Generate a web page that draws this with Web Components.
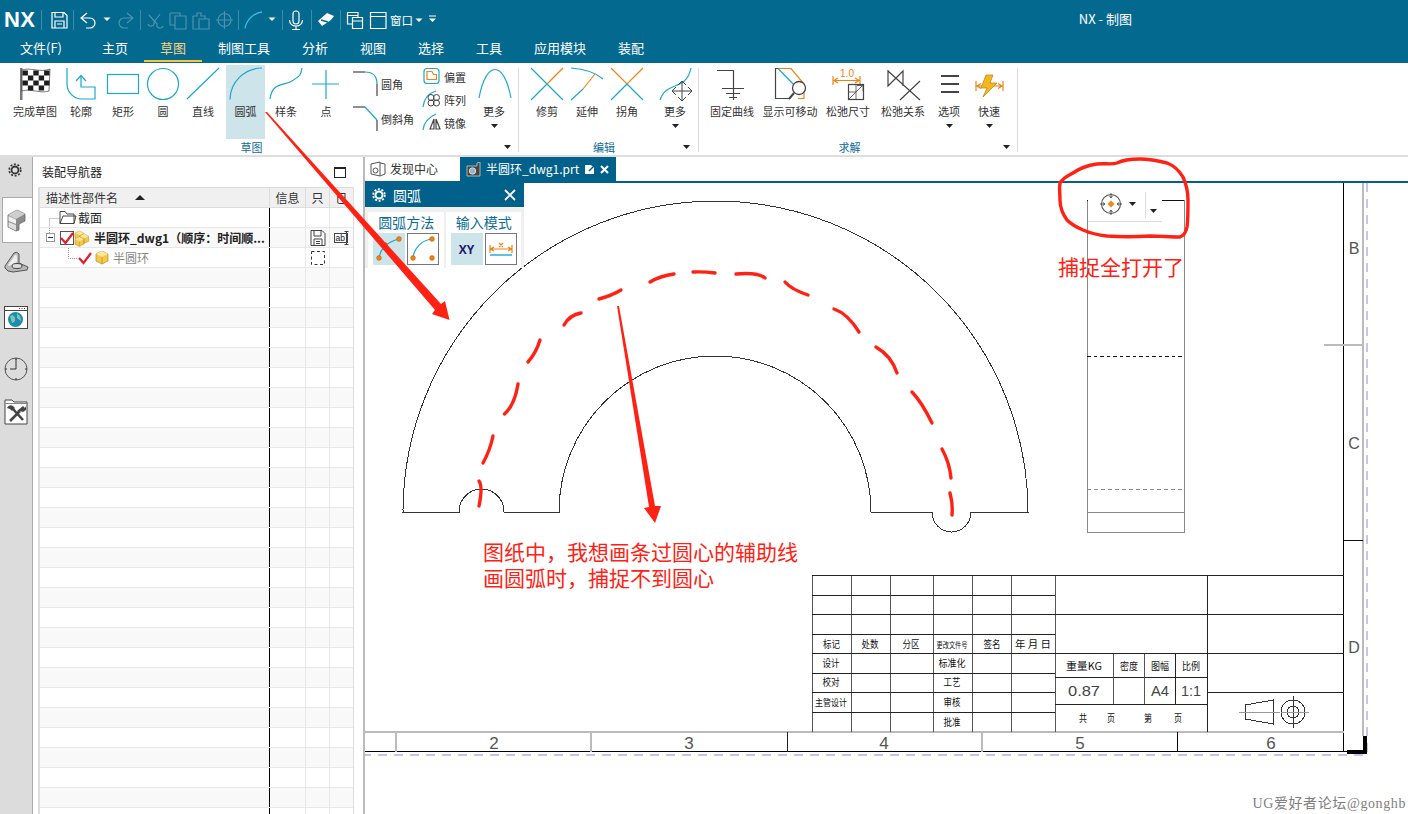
<!doctype html>
<html lang="zh">
<head>
<meta charset="utf-8">
<title>NX - 制图</title>
<style>
  html,body{ margin:0; height:100%; overflow:hidden; background:#fff; }
</style>
</head>
<body>
<nx-app></nx-app>
<script>
const TEAL='#1aa8cc', ORG='#ef8210', DARK='#444', BAR='#04698f', DEEP='#02618a';

function ln(d,c=DARK,w=1.2,extra=''){ return `<path d="${d}" fill="none" stroke="${c}" stroke-width="${w}" ${extra}/>`; }
function dot(x,y,r=2.4){ return `<circle cx="${x}" cy="${y}" r="${r}" fill="${ORG}" stroke="#b75f00" stroke-width=".5"/>`; }

// icons are written in page coordinates, each tool cuts its own viewBox out of them
let flag=`<path d="M20 68h2.5v32H20z" fill="#777"/><path d="M22 70c9-3 18 3 28-1l-1 22c-9 3-18-3-27 0z" fill="#fff" stroke="#222" stroke-width=".6"/>`;
[[0,0],[2,0],[4,0],[1,1],[3,1],[0,2],[2,2],[4,2],[1,3],[3,3]].forEach(([c,r])=>{
  flag+=`<rect x="${22.5+c*5.4}" y="${70.5+r*5}" width="5.4" height="5" fill="#1d1d1d"/>`;
});
const ICONS={
  flag,
  outline: ln('M67 68V84A15 15 0 0 0 82 99H95V87H81V76',TEAL)+ln('M76 81L81 75.5L86 81',TEAL),
  rect: `<rect x="107.5" y="74.5" width="31" height="19" fill="none" stroke="${TEAL}" stroke-width="1.2"/>`,
  circle: `<circle cx="163" cy="84" r="15.5" fill="none" stroke="${TEAL}" stroke-width="1.2"/>`,
  line: ln('M187 99L219 68',TEAL),
  arc: ln('M230 99.5A32 32 0 0 1 262 68',TEAL),
  spline: ln('M270 99C272 82 284 86 292 81S301 75 302 68',TEAL),
  point: ln('M312 84H339M326 70V99',TEAL),
  fillet: ln('M353 72H365',DARK)+ln('M365 72Q377 72 377 84',TEAL)+ln('M377 84V96',DARK),
  chamfer: ln('M353 107H365',DARK)+ln('M365 107L377 120',TEAL)+ln('M377 120V131',DARK),
  offset: `<rect x="424" y="68.5" width="15" height="15" rx="3" fill="none" stroke="${TEAL}" stroke-width="1.2"/><path d="M427 71.5h5l1.5 3h3v5h-9.5z" fill="#fff" stroke="${ORG}" stroke-width="1.2"/>`,
  pattern: ln('M423 107C424 98 429 93 436 91',TEAL)+`<g fill="none" stroke="${DARK}"><circle cx="431" cy="97.5" r="3"/><circle cx="436.5" cy="97.5" r="3"/><circle cx="431" cy="103" r="3"/><circle cx="436.5" cy="103" r="3"/></g>`,
  mirror: ln('M423 130C424 122 429 117 436 114',TEAL)+ln('M430 129L434 119V129ZM436 119V129H440Z',DARK),
  more: ln('M479 98C486 60 504 60 511 98',TEAL),
  trim: ln('M531 68L563 100M547 84L531 100',TEAL)+ln('M563 68L547 84',ORG),
  extend: ln('M571 68C585 69 596 73 603 79',TEAL)+ln('M571 100L583 89',TEAL)+ln('M583 89L595 74',ORG),
  corner: ln('M611 68L627 84L643 68',ORG)+ln('M627 84L611 100M627 84L643 100',TEAL),
  more2: ln('M660 100C667 80 686 92 691 68',TEAL)+ln('M672 91H692M682 81V101M678 85L682 81L686 85M678 97L682 101L686 97M676 87L672 91L676 95M688 87L692 91L688 95',DARK,1),
  fix: ln('M717 70.5H733.5V100M722 88.5H744M726 93.5H740M729 97.5H737',DARK),
  movable: ln('M789 98.5H775.5V68.5H779',DARK)+ln('M779 68.5H791L804 84V98.5H798',ORG)+ln('M778 68.5L796 87',TEAL)+`<circle cx="799" cy="88" r="6.5" fill="#fff" stroke="${DARK}" stroke-width="1.3"/>`+ln('M794 93L789 99',DARK,2),
  relaxdim: ln('M833 76V85M860 76V85M834 80.5H859M838 78L834 80.5L838 83M855 78L859 80.5L855 83',ORG)+`<text x="847" y="77" font-size="10" text-anchor="middle" fill="${ORG}" font-family="Liberation Sans">1.0</text>`+`<rect x="848.5" y="84.5" width="15" height="15" fill="#fff" stroke="${DARK}" stroke-width="1.2"/>`+ln('M849 99L863 85M857 85.5H863V91M856 85V99M849 92H856',DARK,.8),
  relaxrel: ln('M888 70V86L903 71V86M888 71L920 100M920 81L900 100',DARK),
  options: `<path d="M941 75h18v2h-18zM941 83h18v2h-18zM941 91h18v2h-18z" fill="${DARK}"/>`,
  quick: ln('M976 81V91M1003 81V91M977 86H1002M981 83.5L977 86L981 88.5M998 83.5L1002 86L998 88.5',ORG)+`<path d="M993 75H986L981 88H987L983 97L997 83H990Z" fill="#f4b81e" stroke="#b27f08" stroke-width=".7"/>`,
};

function caret(w=7){ return `<svg width="${w}" height="4" viewBox="0 0 7 4" style="display:block"><path d="M0 0H7L3.5 4Z" fill="currentColor"/></svg>`; }

customElements.define('nx-titlebar', class extends HTMLElement{
  constructor(){ super(); this.attachShadow({mode:'open'}); }
  connectedCallback(){
    const W='#fff', F='#4d93ae';
    const seps=[41.5,73.5,140.5,238.5,282.5,311.5,340.5].map(x=>`<path d="M${x} 10V30" stroke="#3f8aa9"/>`).join('');
    const tri=(x,y)=>`<path d="M${x-3.5} ${y-1.5}H${x+3.5}L${x} ${y+2}Z" fill="#fff"/>`;
    this.shadowRoot.innerHTML=`
    <style>
      :host{ display:flex; align-items:center; height:38px; background:${BAR}; color:#fff; padding-top:2px; box-sizing:border-box; }
      .logo{ font:bold 22px/24px "Liberation Sans",sans-serif; width:40px; padding-left:4px; box-sizing:border-box; letter-spacing:.3px; }
      svg{ display:block; flex:none; }
      .win{ font-size:11.5px; line-height:16px; margin-left:2px; width:22px; white-space:nowrap; }
      .title{ margin-left:auto; margin-right:276px; font-size:13px; line-height:16px; margin-top:-2px; white-space:nowrap; }
    </style>
    <span class="logo">NX</span>
    <svg width="348" height="24" viewBox="40 8 348 24">
      ${seps}
      ${ln('M52 12.5H64L67 15.5V28H52ZM55 12.5V17H63V12.5M55 28V21H64V28M57 24H62',W,1.2)}
      ${ln('M87 13L81 18L87 23M81 18H90A5 5 0 0 1 90 28H86',W,1.2)}${tri(107,19)}
      ${ln('M127 13L133 18L127 23M133 18H124A5 5 0 0 0 124 28H128',F,1.2)}
      ${ln('M148 24A3 3 0 1 0 154 22L160 14M163 26A3 3 0 1 1 157 24L149 15',F,1.2)}
      ${ln('M170 13H180V16M175 16H186V29H175ZM175 25H170V13',F,1.2)}
      ${ln('M193 16H197V13H201V16H205V19M199 19H209V29H199ZM199 29H193V16',F,1.2)}
      ${ln('M218 20A6.5 6.5 0 1 1 231 20A6.5 6.5 0 1 1 218 20M224.5 11V29M216 20H233',F,1.2)}
      ${ln('M245 28.5A20 20 0 0 1 262 12','#35bde6',1.3)}${tri(272,19)}
      ${ln('M293 14A3 3 0 0 1 299 14V21A3 3 0 0 1 293 21ZM289.5 20C289.5 28 302.5 28 302.5 20M296 26V29.5M292 29.5H300',W,1.2)}
      <path d="M318 21L327 13L334 16L331 20L322 26Z" fill="${W}"/><path d="M321 20L328 22" stroke="${BAR}" stroke-width="1.4"/>
      ${ln('M347.5 12.5H358V17M347.5 12.5V24H352M347.5 15.5H358M352.5 17.5H362.5V28.5H352.5ZM352.5 21H362.5',W,1.2)}
      ${ln('M370.5 12.5H386V28.5H370.5ZM370.5 16.5H386',W,1.2)}
    </svg>
    <span class="win">窗口</span>
    <svg width="30" height="24" viewBox="414 8 30 24" style="margin-left:2px">${tri(419,20)}<path d="M429 16H436" stroke="#fff"/>${tri(432.5,20)}</svg>
    <span class="title">NX - 制图</span>`;
  }
});

customElements.define('nx-menubar', class extends HTMLElement{
  constructor(){ super(); this.attachShadow({mode:'open'}); }
  connectedCallback(){
    const items=['主页','草图','制图工具','分析','视图','选择','工具','应用模块','装配'];
    this.shadowRoot.innerHTML=`
    <style>
      :host{ display:flex; height:25px; background:${BAR}; color:#fff; font-size:13px; line-height:20px; padding-left:20px; box-sizing:border-box; }
      span{ display:block; height:24px; padding:0 16px; box-sizing:border-box; white-space:nowrap; }
      .file{ padding:0 24px 0 0; }
      .on{ color:#fbd27d; border-bottom:2px solid #f5c543; }
    </style>
    <span class="file">文件(F)</span>
    ${items.map(t=>`<span class="${t=='草图'?'on':''}">${t}</span>`).join('')}`;
  }
});

customElements.define('nx-tool', class extends HTMLElement{
  constructor(){ super(); this.attachShadow({mode:'open'}); }
  connectedCallback(){
    const x=+this.getAttribute('x'), w=+this.getAttribute('w');
    this.shadowRoot.innerHTML=`
    <style>
      :host{ display:flex; flex-direction:column; align-items:center; flex:none; height:74px; width:${w}px; color:#333; }
      :host([active]){ background:#cce4ea; }
      svg{ display:block; flex:none; overflow:visible; }
      .t{ margin-top:2px; line-height:14px; white-space:nowrap; }
      .c{ margin-top:6px; color:#222; }
    </style>
    <svg width="${w}" height="37" viewBox="${x} 65 ${w} 37">${ICONS[this.getAttribute('icon')]}</svg>
    <div class="t"><slot></slot></div>
    ${this.hasAttribute('drop')?`<div class="c">${caret()}</div>`:''}`;
  }
});

customElements.define('nx-mini', class extends HTMLElement{
  constructor(){ super(); this.attachShadow({mode:'open'}); }
  connectedCallback(){
    const [x,y,w,h]=this.getAttribute('box').split(' ').map(Number);
    this.shadowRoot.innerHTML=`
    <style>
      :host{ display:flex; align-items:center; height:${h}px; color:#333; white-space:nowrap; }
      svg{ display:block; flex:none; }
    </style>
    <svg width="${w}" height="${h}" viewBox="${x} ${y} ${w} ${h}">${ICONS[this.getAttribute('icon')]}</svg><slot></slot>`;
  }
});

customElements.define('nx-group', class extends HTMLElement{
  constructor(){ super(); this.attachShadow({mode:'open'}); }
  connectedCallback(){
    this.shadowRoot.innerHTML=`
    <style>
      :host{ display:flex; flex-direction:column; flex:none; box-sizing:border-box; position:relative; }
      :host::after{ content:""; position:absolute; right:0; top:3px; bottom:3px; width:1px; background:#d9d9d9; }
      .tools{ display:flex; height:74px; }
      .foot{ display:flex; height:16px; align-items:center; color:#222; }
      .name{ flex:1; text-align:center; color:#0b6c96; line-height:16px; }
      .c{ width:var(--tail); padding-left:var(--ml); box-sizing:border-box; }
    </style>
    <div class="tools"><slot></slot></div>
    <div class="foot"><div class="name">${this.getAttribute('name')}</div><div class="c">${caret()}</div></div>`;
  }
});

customElements.define('nx-ribbon', class extends HTMLElement{
  constructor(){ super(); this.attachShadow({mode:'open'}); }
  connectedCallback(){
    const tools=(x,list)=>list.map(([w,icon,label,opt])=>{
      const s=`<nx-tool x="${x}" w="${w}" icon="${icon}" ${opt||''}>${label}</nx-tool>`;
      x+=w; return s;
    }).join('');
    this.shadowRoot.innerHTML=`
    <style>
      :host{ display:flex; height:94px; box-sizing:border-box; padding:2px 0 0 8px; background:#fff; border-bottom:2px solid #ddd; font-size:11px; }
      .stack{ display:flex; flex-direction:column; flex:none; }
      .fil{ width:75px; padding-top:4px; gap:5px; box-sizing:border-box; }
      .tri{ width:50px; }
    </style>
    <nx-group name="草图" style="width:511px;--tail:24px;--ml:9px">
      ${tools(8,[[54,'flag','完成草图'],[38,'outline','轮廓'],[46,'rect','矩形'],[34,'circle','圆'],[46,'line','直线'],[39,'arc','圆弧','active'],[42,'spline','样条'],[38,'point','点']])}
      <div class="stack fil">
        <nx-mini box="345 69 36 30" icon="fillet">圆角</nx-mini>
        <nx-mini box="345 104 36 30" icon="chamfer">倒斜角</nx-mini>
      </div>
      <div class="stack tri">
        <nx-mini box="420 65 24 23" icon="offset">偏置</nx-mini>
        <nx-mini box="420 88 24 23" icon="pattern">阵列</nx-mini>
        <nx-mini box="420 111 24 23" icon="mirror">镜像</nx-mini>
      </div>
      ${tools(470,[[48,'more','更多','drop']])}
    </nx-group>
    <nx-group name="编辑" style="width:180px;padding-left:8px;--tail:18px;--ml:2px">
      ${tools(527,[[40,'trim','修剪'],[40,'extend','延伸'],[40,'corner','拐角']])}
      <span style="width:4px"></span>
      ${tools(651,[[48,'more2','更多','drop']])}
    </nx-group>
    <nx-group name="求解" style="width:319px;--tail:18px;--ml:3px">
      ${tools(699,[[66,'fix','固定曲线'],[50,'movable','显示可移动'],[66,'relaxdim','松弛尺寸'],[44,'relaxrel','松弛关系'],[48,'options','选项','drop'],[32,'quick','快速','drop']])}
    </nx-group>`;
  }
});

customElements.define('nx-sidebar', class extends HTMLElement{
  constructor(){ super(); this.attachShadow({mode:'open'}); }
  connectedCallback(){
    this.shadowRoot.innerHTML=`
    <style>
      :host{ display:block; width:33px; background:#dcdcdc; border-right:1px solid #aaa; box-sizing:border-box; flex:none; }
      div{ display:flex; align-items:center; justify-content:center; box-sizing:border-box; }
      svg{ display:block; }
      .on{ background:#fff; width:30px; margin-left:2px; border:1px solid #aaa; border-right:0; }
    </style>
    <div style="height:40px;padding:0 3px 14px 0">
      <svg width="14" height="14" viewBox="0 0 14 14"><circle cx="7" cy="7" r="3.5" fill="none" stroke="#333" stroke-width="1.8"/><circle cx="7" cy="7" r="5.8" fill="none" stroke="#333" stroke-width="1.6" stroke-dasharray="2 1.64"/></svg>
    </div>
    <div class="on" style="height:46px;padding-right:2px">
      <svg width="19" height="23" viewBox="0 0 19 23"><path d="M1 6L10 1L18 5L18 12L12 15V21L9 22L1 18Z" fill="#8c8c8c" stroke="#666" stroke-width=".8"/><path d="M1 6L10 1L18 5L9 10Z" fill="#cfcfcf"/><path d="M1.5 7L9 10.5V15L1.5 12Z" fill="#f0f0f0"/><path d="M1.5 13L9 16V21.5L1.5 18Z" fill="#dedede"/></svg>
    </div>
    <div style="height:38px">
      <svg width="25" height="22" viewBox="0 0 25 22"><path d="M1 15L10 2Q13 0 15 3V12L24 16L23 19L9 21Q3 21 1 17Z" fill="#b8b8b8" stroke="#555"/><path d="M4 14L11 4Q13 3 13 6V11L5 15Z" fill="#eee"/><ellipse cx="13" cy="15" rx="5" ry="2.5" fill="#ddd" stroke="#444"/></svg>
    </div>
    <div style="height:13px"></div>
    <div style="height:46px">
      <svg width="24" height="23" viewBox="0 0 24 23"><rect x=".5" y=".5" width="23" height="22" fill="#fff" stroke="#444"/><path d="M1 4.5H23" stroke="#444"/><path d="M15 2.5H22" stroke="#444" stroke-dasharray="1 1.5"/><circle cx="11.5" cy="13.5" r="7.5" fill="#1b8db0"/><path d="M6 10Q10 8 11 12T8 17ZM13 7Q17 10 17 15L13 12Z" fill="#7fc4b0"/></svg>
    </div>
    <div style="height:3px"></div>
    <div style="height:52px">
      <svg width="24" height="24" viewBox="0 0 24 24"><circle cx="12" cy="12" r="11" fill="none" stroke="#555"/><path d="M12 1V3M12 21V23M1 12H3M21 12H23M12 2V12H6" fill="none" stroke="#333"/></svg>
    </div>
    <div style="height:34px">
      <svg width="24" height="26" viewBox="0 0 24 26"><path d="M1 4V1H8L10 3H23V25H1Z" fill="#fff" stroke="#444"/><path d="M1 4.5H23" stroke="#888"/><path d="M6 22L16 12M9 10L19 21" stroke="#444" stroke-width="2.6"/><path d="M3 9A4 4 0 0 1 9 7L11 9L8 12L6 10ZM13 12L19 7L21 9L22 7V11L19 13L16 12L15 14Z" fill="#444"/></svg>
    </div>`;
  }
});

customElements.define('nx-tree-row', class extends HTMLElement{
  constructor(){ super(); this.attachShadow({mode:'open'}); }
  connectedCallback(){
    const odd=this.hasAttribute('odd');
    this.shadowRoot.innerHTML=`
    <style>
      :host{ display:grid; grid-template-columns:230px 36px 24px 23px; height:20px; box-sizing:border-box; background:${odd?'#f9f9f9':'#fff'}; border-bottom:1px solid #e8e8e8; font-size:12px; line-height:19px; color:#222; }
      .c{ box-sizing:border-box; border-right:1px solid #e8e8e8; display:flex; align-items:center; justify-content:center; overflow:visible; min-width:0; }
      .n{ border-right-color:#000; justify-content:flex-start; white-space:nowrap; }
      ::slotted(svg){ display:block; flex:none; }
    </style>
    <div class="c n"><slot></slot></div>
    <div class="c"></div>
    <div class="c"><slot name="a"></slot></div>
    <div class="c" style="border-right:0"><slot name="b"></slot></div>`;
  }
});

customElements.define('nx-navigator', class extends HTMLElement{
  constructor(){ super(); this.attachShadow({mode:'open'}); }
  connectedCallback(){
    const check=(c='#e0202a')=>`<path d="M0 6L4.5 11L12 1" fill="none" stroke="${c}" stroke-width="2.2"/>`;
    const gold=(x,y,s=1)=>`<g transform="translate(${x} ${y}) scale(${s})"><path d="M0 3L6 0L12 3V10L6 13L0 10Z" fill="#f5c84a" stroke="#b9861a" stroke-width=".7"/><path d="M0 3L6 6L12 3L6 0Z" fill="#fde69a"/><path d="M6 6V13" stroke="#b9861a" stroke-width=".6"/></g>`;
    let rows='';
    for(let i=3;i<32;i++) rows+=`<nx-tree-row ${i%2?'odd':''}></nx-tree-row>`;
    this.shadowRoot.innerHTML=`
    <style>
      :host{ display:flex; flex-direction:column; width:330px; flex:none; background:#fff; overflow:hidden; font-size:12px; color:#222; }
      .head{ display:flex; align-items:center; justify-content:space-between; height:30px; flex:none; padding:0 17px 0 9px; box-sizing:border-box; line-height:16px; }
      .max{ width:12px; height:11px; border:1px solid #222; border-top-width:2px; box-sizing:border-box; }
      .table{ margin-left:5px; width:316px; flex:1; min-height:0; border:solid #ddd; border-width:0 1px 0 2px; box-sizing:border-box; overflow:hidden; }
      .cols{ display:grid; grid-template-columns:230px 36px 24px 23px; height:21px; background:#f0f0f0; border-bottom:1px solid #ddd; border-top:1px solid #ddd; box-sizing:border-box; font-size:12px; line-height:19px; color:#333; }
      .cols div{ border-right:1px solid #ddd; text-align:center; white-space:nowrap; overflow:hidden; }
      .cols .f{ text-align:left; padding-left:6px; display:flex; align-items:center; gap:17px; }
      .cols svg{ display:block; }
      .txt{ white-space:nowrap; }
    </style>
    <div class="head"><span>装配导航器</span><span class="max"></span></div>
    <div class="table">
      <div class="cols">
        <div class="f">描述性部件名<svg width="10" height="5"><path d="M0 5H10L5 0Z" fill="#222"/></svg></div>
        <div>信息</div><div>只</div><div style="border-right:0">已</div>
      </div>
      <nx-tree-row>
        <svg width="38" height="19" viewBox="0 0 38 19"><path d="M9.5 10.5H19M9.5 10.5V19" fill="none" stroke="#999" stroke-dasharray="1 1"/><path d="M20 3.5H25L27 6H34V15.5H20ZM20 15.5L23 8H36L34 15.5" fill="none" stroke="#444"/></svg>
        <span class="txt">截面</span>
      </nx-tree-row>
      <nx-tree-row odd>
        <svg width="50" height="19" viewBox="0 0 50 19"><path d="M9.5 0V5" stroke="#999" stroke-dasharray="1 1"/><rect x="6.5" y="5.5" width="8" height="8" fill="#fff" stroke="#999"/><path d="M8 9.5H13" stroke="#333"/><rect x="20.5" y="3.5" width="13" height="13" fill="#fff" stroke="#555"/><g transform="translate(21 4)">${check()}</g>${gold(35,3,.72)}${gold(40,6,.72)}${gold(35,9,.72)}</svg>
        <b class="txt" style="margin-left:4px">半圆环_dwg1（顺序：时间顺...</b>
        <svg slot="a" width="16" height="16" viewBox="0 0 16 16"><path d="M1 .5H12L15 3.5V15.5H1ZM4 .5V6H11V.5M4 15.5V9H12V15.5M6 11.5H10M6 13.5H10" fill="none" stroke="#444"/></svg>
        <svg slot="b" width="16" height="14" viewBox="0 0 16 14"><rect x=".5" y="2.5" width="13" height="9" fill="none" stroke="#444"/><text x="1.5" y="10" font-size="8.5" font-family="Liberation Sans" fill="#222">ab</text><path d="M12.5 0V14M10.5 .5H14.5M10.5 13.5H14.5" stroke="#444"/></svg>
      </nx-tree-row>
      <nx-tree-row>
        <svg width="70" height="19" viewBox="0 0 70 19"><path d="M28.5 0V10.5H38" fill="none" stroke="#999" stroke-dasharray="1 1"/><g transform="translate(39 4)">${check('#e31c2c')}</g>${gold(56,3)}</svg>
        <span class="txt" style="margin-left:3px;color:#888">半圆环</span>
        <svg slot="a" width="14" height="14" viewBox="0 0 14 14"><rect x=".5" y=".5" width="13" height="13" fill="none" stroke="#333" stroke-dasharray="3 2.5"/></svg>
      </nx-tree-row>
      ${rows}
    </div>`;
  }
});

customElements.define('nx-tabs', class extends HTMLElement{
  constructor(){ super(); this.attachShadow({mode:'open'}); }
  connectedCallback(){
    this.shadowRoot.innerHTML=`
    <style>
      :host{ display:flex; height:26px; flex:none; box-sizing:border-box; border-bottom:2px solid ${DEEP}; font-size:12px; line-height:24px; background:#fff; }
      .t{ display:flex; align-items:center; height:24px; white-space:nowrap; }
      .a{ width:95px; padding-left:5px; box-sizing:border-box; gap:4px; color:#333; }
      .b{ width:156px; background:${DEEP}; color:#fff; padding-left:6px; box-sizing:border-box; gap:5px; }
      svg{ display:block; flex:none; }
    </style>
    <div class="t a">
      <svg width="16" height="16" viewBox="0 0 16 16"><path d="M1 3L10 1V15L1 13ZM10 2L15 3V13L10 15" fill="none" stroke="#555"/><circle cx="5.5" cy="9.5" r="2.5" fill="none" stroke="#555"/></svg>
      发现中心
    </div>
    <div class="t b">
      <svg width="15" height="15" viewBox="0 0 15 15"><path d="M1 4H11V1L14 0V14H1Z" fill="#444" stroke="#ccc" stroke-width=".8"/><circle cx="6.5" cy="9" r="3.2" fill="#8fb7c6" stroke="#ddd"/></svg>
      半圆环_dwg1.prt
      <svg width="11" height="11" viewBox="0 0 11 11"><path d="M1 1H7L10 4V10H1Z" fill="#fff"/><path d="M5 7L9 3" stroke="${DEEP}" stroke-width="1.5"/></svg>
      <svg width="9" height="9" viewBox="0 0 9 9"><path d="M1 1L8 8M8 1L1 8" stroke="#fff" stroke-width="2"/></svg>
    </div>`;
  }
});

customElements.define('nx-arc-dialog', class extends HTMLElement{
  constructor(){ super(); this.attachShadow({mode:'open'}); }
  connectedCallback(){
    this.shadowRoot.innerHTML=`
    <style>
      :host{ position:absolute; left:0; top:0; width:159px; background:#f0f0f0; display:block; }
      .h{ display:flex; align-items:center; height:24px; background:${DEEP}; color:#fff; padding:0 8px 0 7px; box-sizing:border-box; font-size:14px; gap:7px; line-height:20px; }
      .x{ margin-left:auto; }
      .b{ display:flex; gap:2px; padding:5px 3px 0; height:61px; box-sizing:border-box; }
      .g{ background:#fff; width:76px; height:56px; padding:0 4px 0 5px; box-sizing:border-box; }
      .l{ color:#0b6c96; font-size:14px; line-height:21px; text-align:center; white-space:nowrap; }
      .r{ display:flex; gap:2px; }
      .k{ width:32px; height:32px; box-sizing:border-box; border:1px solid #777; background:#fff; display:flex; align-items:center; justify-content:center; font:bold 12px "Open Sans","Liberation Sans",sans-serif; color:#1f1a6e; }
      .k.on{ background:#cce4ea; border-color:#cce4ea; }
      svg{ display:block; }
    </style>
    <div class="h">
      <svg width="14" height="14" viewBox="0 0 14 14"><circle cx="7" cy="7" r="3.5" fill="none" stroke="#fff" stroke-width="2"/><circle cx="7" cy="7" r="5.8" fill="none" stroke="#fff" stroke-width="1.8" stroke-dasharray="2 1.64"/></svg>
      <span>圆弧</span>
      <svg class="x" width="12" height="12" viewBox="0 0 12 12"><path d="M1 1L11 11M11 1L1 11" stroke="#fff" stroke-width="1.8"/></svg>
    </div>
    <div class="b">
      <div class="g">
        <div class="l">圆弧方法</div>
        <div class="r">
          <div class="k on"><svg width="30" height="30" viewBox="0 0 30 30">${ln('M5 24C6 16 12 8 25 5',TEAL)}${dot(5,24)}${dot(11,11)}${dot(25,5)}</svg></div>
          <div class="k"><svg width="30" height="30" viewBox="0 0 30 30">${ln('M5 24C6 14 14 6 24 5',TEAL)}${dot(5,24)}${dot(24,24)}${dot(24,5)}</svg></div>
        </div>
      </div>
      <div class="g">
        <div class="l">输入模式</div>
        <div class="r">
          <div class="k on">XY</div>
          <div class="k"><svg width="30" height="30" viewBox="0 0 30 30">${ln('M4 11V19M26 11V19M4.5 15H25.5M8 13L4.5 15L8 17M22 13L25.5 15L22 17M13 9L17 13M17 9L13 13',ORG)}${ln('M4 21H26',TEAL,1.4)}</svg></div>
        </div>
      </div>
    </div>`;
  }
});

customElements.define('nx-snap-bar', class extends HTMLElement{
  constructor(){ super(); this.attachShadow({mode:'open'}); }
  connectedCallback(){
    this.shadowRoot.innerHTML=`
    <style>
      :host{ position:absolute; left:723px; top:9px; width:74px; height:30px; display:flex; align-items:flex-start; background:#fff; border-bottom:1px solid #ddd; box-sizing:border-box; color:#222; }
      svg{ display:block; flex:none; }
      i{ width:1px; height:26px; background:#ddd; margin-left:9px; flex:none; }
    </style>
    <svg width="24" height="24" viewBox="0 0 24 24" style="margin:0 0 0 11px">
      <circle cx="12" cy="12" r="9.5" fill="none" stroke="#555" stroke-width="1.1"/>
      <path d="M12 1V6M12 18V23M1 12H6M18 12H23M10.3 3.7L12 6L13.7 3.7M10.3 20.3L12 18L13.7 20.3M3.7 10.3L6 12L3.7 13.7M20.3 10.3L18 12L20.3 13.7" fill="none" stroke="#555"/>
      <path d="M12 8.5L15.5 12L12 15.5L8.5 12Z" fill="#f08a12"/>
    </svg>
    <span style="margin:10px 0 0 6px">${caret()}</span>
    <i></i>
    <span style="margin:17px 0 0 4px">${caret()}</span>`;
  }
});

customElements.define('nx-drawing', class extends HTMLElement{
  constructor(){ super(); this.attachShadow({mode:'open'}); }
  connectedCallback(){
    const G='#555', H='#222';
    const seg=(x1,y1,x2,y2,c=G,w=1,e='')=>`<line x1="${x1}" y1="${y1}" x2="${x2}" y2="${y2}" stroke="${c}" stroke-width="${w}" ${e}/>`;
    const cols=[812.5,851.5,890.5,933.5,972.5,1011.5,1055.5];
    const rows=[575.5,595.5,614.5,634.5,653.5,673.5,692.5,712.5,732];
    let g='';
    cols.forEach(x=>g+=seg(x,575,x,732,G));
    rows.slice(0,8).forEach(y=>g+=seg(812,y,1055,y,H));
    g+=seg(1055,575.5,1344,575.5,H)+seg(1055,614.5,1344,614.5,H)+seg(1055,653.5,1344,653.5,H);
    g+=seg(1207.5,575,1207.5,732,H)+seg(1207,692.5,1344,692.5,H);
    g+=seg(1055,677.5,1207,677.5,H)+seg(1055,704.5,1207,704.5,H,1.2);
    g+=seg(1113.5,654,1113.5,704,G)+seg(1144.5,654,1144.5,704,G)+seg(1175.5,654,1175.5,704,H);
    const t=(x,y,s,w,size=12,c='#111')=>`<text x="${x}" y="${y}" font-size="${size}" fill="${c}" text-anchor="middle" textLength="${w}" lengthAdjust="spacingAndGlyphs">${s}</text>`;
    const labels=[[831.5,648,'标记',17,10],[870,648,'处数',17,10],[911,648,'分区',17,10],[952,648,'更改文件号',31,8],[992,648,'签名',17,10],
      [1033,648,'年 月 日',36,10],[831,667,'设计',17,10],[952,667,'标准化',27,10],[831,686,'校对',17,10],[952,686,'工艺',17,10],
      [831,706,'主管设计',32,9],[952,706,'审核',17,10],[952,726,'批准',17,10],[1084,670,'重量KG',36,10],[1129,670,'密度',18,10],[1160,670,'图幅',18,10],[1191,670,'比例',18,10],
      [1083,722,'共',8,10],[1111,722,'页',8,10],[1148,722,'第',8,10],[1178,722,'页',8,10]];
    const thin=[[1084,696,'0.87',32],[1160,696,'A4',18],[1191,696,'1:1',20]];
    const nums=[[494,2],[689,3],[884,4],[1080,5],[1271,6]];
    const side=[['B',248],['C',443],['D',647]];
    this.shadowRoot.innerHTML=`
    <style>
      :host{ display:block; position:relative; flex:1; min-height:0; background:#fff; overflow:hidden; }
      svg{ position:absolute; left:0; top:0; display:block; font-family:"Noto Sans CJK SC","Liberation Sans",sans-serif; }
      .thin{ font-family:"Liberation Sans",sans-serif; }
    </style>
    <svg width="1043" height="631" viewBox="365 183 1043 631">
      <g shape-rendering="crispEdges">
        <path d="M403 512A312.5 311 0 0 1 1028 512H971A19.5 20 0 0 1 932 512H871A156 156 0 0 0 559 512H504A22.5 23 0 0 0 459 512Z" fill="none" stroke="#333"/>
        ${seg(1087.5,200,1087.5,532.5,'#888')}${seg(1184.5,200,1184.5,532.5,'#888')}
        ${seg(1087,200.5,1184,200.5,'#111')}
        ${seg(1087,356.5,1184,356.5,'#111',1,'stroke-dasharray="3.5 3"')}
        ${seg(1087,489.5,1184,489.5,'#888',1,'stroke-dasharray="4 3"')}
        ${seg(1087,512.5,1184,512.5,'#888')}${seg(1087,532.5,1184,532.5,'#888')}
        ${seg(1343.5,183,1343.5,752,'#000')}
        ${seg(1363,183,1363,736,'#bbb',2)}
        <path d="M1367 183V755H365" fill="none" stroke="#c4c4f4" stroke-width="2" stroke-dasharray="9 7"/>
        ${seg(1324,345,1363,345,'#bbb',2)}
        ${seg(1344,540.5,1363,540.5,'#111')}
        ${seg(365,732,1344,732,'#bbb',2)}
        ${seg(365,751.5,1364,751.5,'#000')}
        ${seg(396,732,396,752,'#bbb',2)}${seg(591,732,591,752,'#bbb',2)}
        ${seg(787.5,732,787.5,752,'#222')}${seg(982,732,982,752,'#bbb',2)}${seg(1177.5,732,1177.5,752,'#000')}
        <path d="M1347 752H1364.5V736" fill="none" stroke="#000" stroke-width="4"/>
        ${g}
        <path d="M1245 705L1273.5 700V724L1245 719Z" fill="none" stroke="#333"/>
        ${seg(1239,712.5,1280,712.5,'#999')}
        <circle cx="1293" cy="712" r="12" fill="none" stroke="#333"/><circle cx="1293" cy="712" r="6" fill="none" stroke="#333"/>
        ${seg(1293.5,696,1293.5,728,'#333')}${seg(1281,712.5,1309,712.5,'#999')}
      </g>
      ${labels.map(l=>t(...l)).join('')}
      <g class="thin">${thin.map(([x,y,s,w])=>t(x,y,s,w,15,'#444')).join('')}
      ${nums.map(([x,n])=>`<text x="${x}" y="749" font-size="17" text-anchor="middle" fill="#555">${n}</text>`).join('')}
      ${side.map(([s,y])=>`<text x="1354" y="${y+6}" font-size="16" text-anchor="middle" fill="#555">${s}</text>`).join('')}</g>
    </svg>
    <nx-arc-dialog></nx-arc-dialog>
    <nx-snap-bar></nx-snap-bar>`;
  }
});

customElements.define('nx-annotations', class extends HTMLElement{
  constructor(){ super(); this.attachShadow({mode:'open'}); }
  connectedCallback(){
    const R='#ff2214';
    // hand drawn strokes: three points each, bent through the middle one
    const dashes=[[479,481,481,490,479,506],[493,436,489,450,483,463],[518,384,513,402,504.5,414],[540,340,535,352,528,362],[581,313,571,317,564,325],[621,290,611,295,599,299],[674,274,661,277,650,282],[693,272,704,272,715,273],[736,274,754,274,765,278],[785,282,794,289,808,295],[834,309,847,317,859,332],[876,347,889,358,897,373],[912,392,922,405,932,423],[942,449,948,463,951,478],[950,493,952,504,952,515]];
    const bent=([a,b,c,d,e,f])=>`M${a} ${b}Q${2*c-(a+e)/2} ${2*d-(b+f)/2} ${e} ${f}`;
    this.shadowRoot.innerHTML=`
    <style>
      :host{ position:absolute; inset:0; display:block; pointer-events:none; }
      svg{ display:block; }
      .note{ position:absolute; font:21px/26px "Liberation Sans","Noto Sans CJK SC",sans-serif; color:${R}; white-space:nowrap; }
      .mark{ position:absolute; right:2px; bottom:2px; font:14px/16px "Liberation Serif","Noto Sans CJK SC",serif; letter-spacing:.6px; color:#808080; white-space:nowrap; }
    </style>
    <svg width="1408" height="814" viewBox="0 0 1408 814">
      <path d="M265 112L267 112L441 304L445 301L449.5 320L432 314L435 310Z" fill="${R}"/>
      <path d="M617 306L619 306L655 506L661 506L655 523L644 508L649 507Z" fill="${R}"/>
      <g fill="none" stroke="${R}" stroke-width="3.4" stroke-linecap="round" stroke-linejoin="round">
        ${dashes.map(d=>`<path d="${bent(d)}"/>`).join('')}
        <path d="M1060 183C1064 177 1068 176 1073 173C1080 168 1090 165 1097 164C1105 163 1111 165 1117 163C1125 159 1133 159 1140 159C1150 159 1159 161 1167 163C1175 166 1180 172 1183 177C1187 186 1188 192 1188 200C1188 210 1188 220 1187 227C1186 232 1183 236 1180 237C1170 237 1160 236 1150 236C1135 237 1120 237 1107 236C1098 235 1090 233 1083 230C1076 227 1070 223 1067 220C1062 213 1060 207 1060 200C1060 194 1059 189 1060 183Z"/>
      </g>
    </svg>
    <div class="note" style="left:1058px;top:255px">捕捉全打开了</div>
    <div class="note" style="left:483px;top:540px">图纸中，我想画条过圆心的辅助线<br>画圆弧时，捕捉不到圆心</div>
    <div class="mark">UG爱好者论坛@gonghb</div>`;
  }
});

customElements.define('nx-app', class extends HTMLElement{
  constructor(){ super(); this.attachShadow({mode:'open'}); }
  connectedCallback(){
    this.shadowRoot.innerHTML=`
    <style>
      :host{ display:grid; grid-template-rows:38px 25px 94px minmax(0,1fr); width:1408px; height:814px; position:relative; overflow:hidden; font-family:"Noto Sans CJK SC","Liberation Sans",sans-serif; background:#fff; }
      .work{ display:flex; min-height:0; }
      .main{ display:flex; flex-direction:column; flex:1; min-width:0; border-left:2px solid #bbb; }
    </style>
    <nx-titlebar></nx-titlebar>
    <nx-menubar></nx-menubar>
    <nx-ribbon></nx-ribbon>
    <div class="work">
      <nx-sidebar></nx-sidebar>
      <nx-navigator></nx-navigator>
      <div class="main">
        <nx-tabs></nx-tabs>
        <nx-drawing></nx-drawing>
      </div>
    </div>
    <nx-annotations></nx-annotations>`;
  }
});
</script>
</body>
</html>
